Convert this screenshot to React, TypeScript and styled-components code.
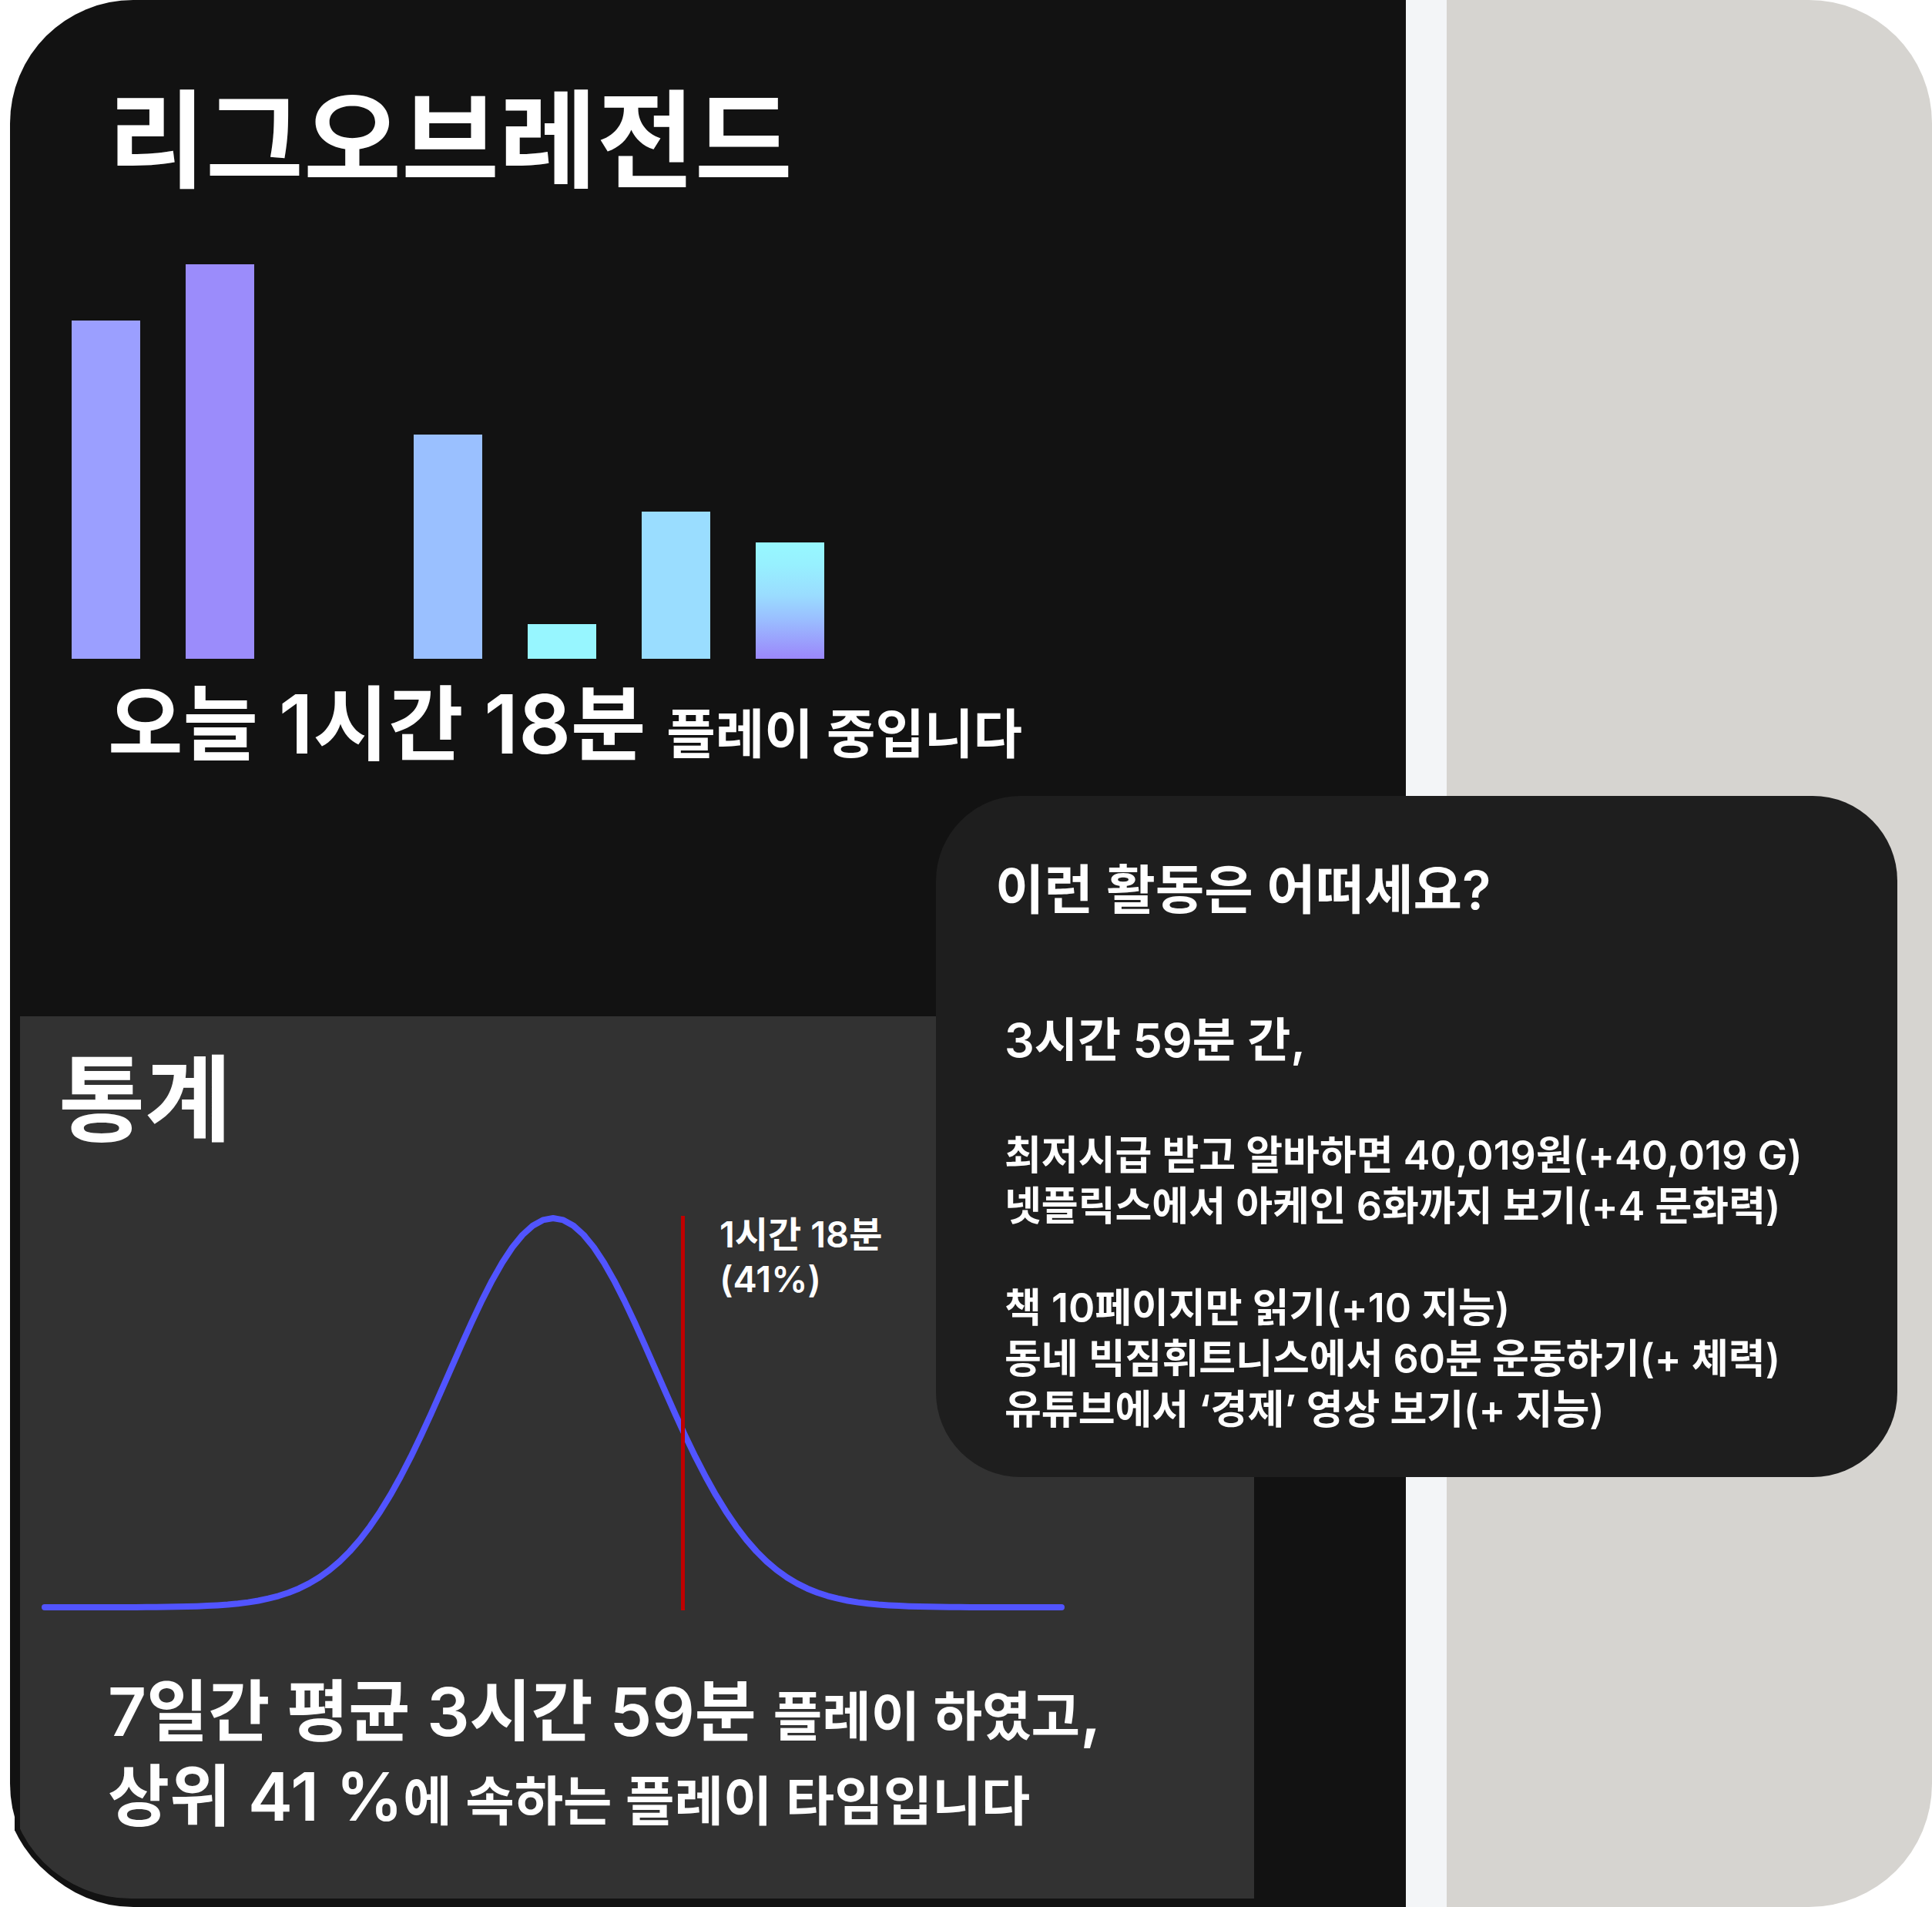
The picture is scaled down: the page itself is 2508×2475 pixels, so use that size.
import React from "react";
import styled, { createGlobalStyle } from "styled-components";

const color = {
  ink: "#121212",
  stats: "#323232",
  card: "#1e1e1e",
  strip: "#f3f5f7",
  side: "#d6d4d0",
  curve: "#5154ff",
  marker: "#c00000",
};

const GlobalStyle = createGlobalStyle`
  *, *::before, *::after { box-sizing: border-box; }
  body {
    margin: 0;
    background: #ffffff;
    color: #ffffff;
    font-family: Inter, "Noto Sans CJK KR", sans-serif;
    font-weight: 600;
  }
  h1, h2, p, ul, figure { margin: 0; padding: 0; font-weight: inherit; }
  ul { list-style: none; }
`;

const Page = styled.main`
  position: relative;
  display: grid;
  grid-template-columns: 1812fr 53fr 630fr;
  padding-left: 13px;
`;

const GamePanel = styled.section`
  display: flex;
  flex-direction: column;
  min-width: 0;
  padding: 102px 0 11px;
  background: ${color.ink};
  border-radius: 160px 0 0 160px;
`;

const Strip = styled.div`
  background: ${color.strip};
`;

const SidePanel = styled.div`
  background: ${color.side};
  border-radius: 0 160px 160px 0;
`;

const GameTitle = styled.h1`
  padding-left: 127px;
  font-size: 138px;
  line-height: 160px;
`;

const BarChart = styled.div`
  display: flex;
  align-items: flex-end;
  gap: 59px;
  height: 512px;
  margin: 81px 0 0 80px;
`;

const Bar = styled.div<{ $fill: string }>`
  width: 89px;
  background: ${(p) => p.$fill};
`;

const Today = styled.p`
  margin: 21px 0 315px;
  padding-left: 127px;
  font-size: 106px;
  line-height: 128px;
  white-space: nowrap;
`;

const Small = styled.span`
  font-size: 69px;
  line-height: 1;
`;

/* The dark rim hugs the rounded corner, and both are cut straight on the left. */
const StatsPanel = styled.section`
  width: 1618px;
  margin-left: -3px;
  padding: 36px 0 77px 36px;
  background: linear-gradient(to right, ${color.ink} 16px, ${color.stats} 16px);
  border-bottom-left-radius: 160px;
  box-shadow: 0 0 0 7px ${color.ink};
  clip-path: inset(0 0 -7px 9px);
`;

const StatsTitle = styled.h2`
  padding-left: 30px;
  font-size: 122px;
  line-height: 144px;
`;

const Distribution = styled.figure`
  position: relative;
  margin: 74px 0;
`;

const Curve = styled.svg`
  display: block;
  width: 1344px;
  height: 520px;
`;

const MarkerLabel = styled.figcaption`
  position: absolute;
  top: 0;
  left: 888px;
  font-size: 47px;
  line-height: 58px;
`;

const Summary = styled.p`
  padding-left: 94px;
  font-size: 87px;
  line-height: 110px;
  white-space: nowrap;
`;

const SuggestionCard = styled.aside`
  position: absolute;
  top: 1033px;
  right: 45px;
  width: 1248px;
  padding: 80px 77px 54px;
  background: ${color.card};
  border-radius: 110px;
`;

const CardTitle = styled.h2`
  font-size: 69px;
  line-height: 84px;
`;

const CardBody = styled.div`
  padding-left: 12px;
  white-space: nowrap;
`;

const Lead = styled.p`
  margin: 117px 0 81px;
  font-size: 61px;
  line-height: 72px;
`;

const Activities = styled.ul`
  font-size: 52px;
  line-height: 66px;

  & + & {
    margin-top: 66px;
  }
`;

const bars = [
  { height: 439, fill: "#9b9fff" },
  { height: 512, fill: "#9b8cfb" },
  { height: 0, fill: "transparent" },
  { height: 291, fill: "#9ac0ff" },
  { height: 45, fill: "#97f6ff" },
  { height: 191, fill: "#9addff" },
  {
    height: 151,
    fill: "linear-gradient(#97f8ff 0%, #97f0ff 20%, #9addff 45%, #9ac0ff 65%, #9b87fb 100%)",
  },
];

const earning = [
  "최저시급 받고 알바하면 40,019원(+40,019 G)",
  "넷플릭스에서 아케인 6화까지 보기(+4 문화력)",
];

const growing = [
  "책 10페이지만 읽기(+10 지능)",
  "동네 빅짐휘트니스에서 60분 운동하기(+ 체력)",
  "유튜브에서 ‘경제’ 영상 보기(+ 지능)",
];

const MEAN = 672;
const SIGMA = 134;
const BASE = 513;
const PEAK = 505;
const SEGMENTS = 100;

const curvePoints = Array.from({ length: SEGMENTS + 1 }, (_, i) => {
  const x = 12 + (i * 1320) / SEGMENTS;
  const z = (x - MEAN) / SIGMA;
  const y = BASE - PEAK * Math.exp((-z * z) / 2);
  return `${x.toFixed(1)},${y.toFixed(1)}`;
}).join(" ");

export default function App() {
  return (
    <>
      <GlobalStyle />
      <Page>
        <GamePanel>
          <GameTitle>리그오브레전드</GameTitle>
          <BarChart>
            {bars.map((bar, i) => (
              <Bar key={i} $fill={bar.fill} style={{ height: bar.height }} />
            ))}
          </BarChart>
          <Today>
            오늘 1시간 18분 <Small>플레이 중입니다</Small>
          </Today>
          <StatsPanel>
            <StatsTitle>통계</StatsTitle>
            <Distribution>
              <Curve viewBox="0 0 1344 520" aria-hidden="true">
                <polyline
                  points={curvePoints}
                  fill="none"
                  stroke={color.curve}
                  strokeWidth="8"
                  strokeLinecap="round"
                  strokeLinejoin="round"
                />
                <rect x="838" y="5" width="5" height="512" fill={color.marker} />
              </Curve>
              <MarkerLabel>
                1시간 18분
                <br />
                (41%)
              </MarkerLabel>
            </Distribution>
            <Summary>
              7일간 평균 3시간 59분 <Small>플레이 하였고</Small>,
              <br />
              상위 41 %<Small>에 속하는 플레이 타임입니다</Small>
            </Summary>
          </StatsPanel>
        </GamePanel>
        <Strip />
        <SidePanel />
        <SuggestionCard>
          <CardTitle>이런 활동은 어떠세요?</CardTitle>
          <CardBody>
            <Lead>3시간 59분 간,</Lead>
            <Activities>
              {earning.map((text) => (
                <li key={text}>{text}</li>
              ))}
            </Activities>
            <Activities>
              {growing.map((text) => (
                <li key={text}>{text}</li>
              ))}
            </Activities>
          </CardBody>
        </SuggestionCard>
      </Page>
    </>
  );
}
